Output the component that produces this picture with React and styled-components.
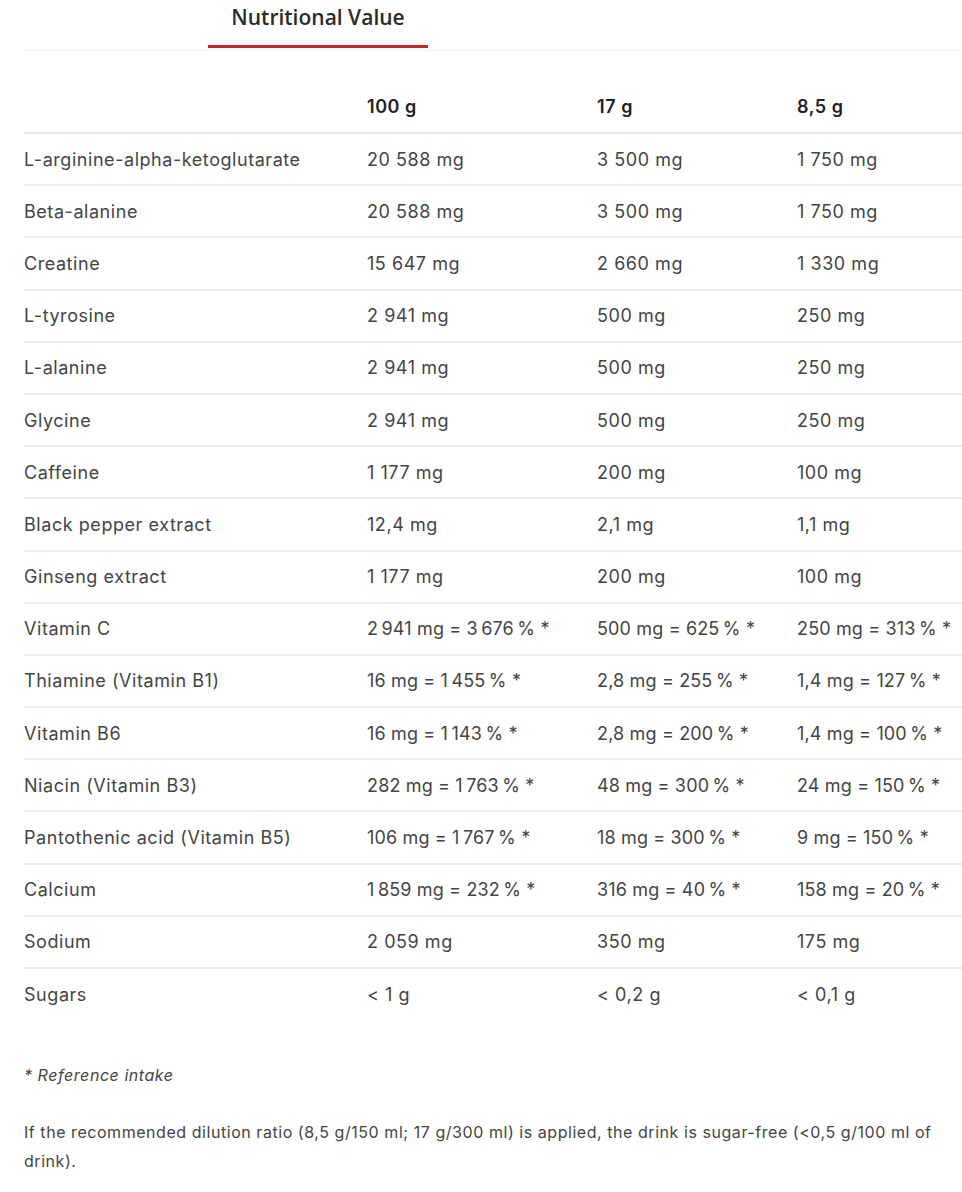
import React from "react";
import styled, { createGlobalStyle } from "styled-components";

const GlobalStyle = createGlobalStyle`
  body {
    margin: 0;
    background: #ffffff;
    font-family: Inter, "Noto Sans", "Liberation Sans", sans-serif;
    color: #444444;
  }
`;

const rows = [
  ["L-arginine-alpha-ketoglutarate", "20 588 mg", "3 500 mg", "1 750 mg"],
  ["Beta-alanine", "20 588 mg", "3 500 mg", "1 750 mg"],
  ["Creatine", "15 647 mg", "2 660 mg", "1 330 mg"],
  ["L-tyrosine", "2 941 mg", "500 mg", "250 mg"],
  ["L-alanine", "2 941 mg", "500 mg", "250 mg"],
  ["Glycine", "2 941 mg", "500 mg", "250 mg"],
  ["Caffeine", "1 177 mg", "200 mg", "100 mg"],
  ["Black pepper extract", "12,4 mg", "2,1 mg", "1,1 mg"],
  ["Ginseng extract", "1 177 mg", "200 mg", "100 mg"],
  ["Vitamin C", "2 941 mg = 3 676 % *", "500 mg = 625 % *", "250 mg = 313 % *"],
  ["Thiamine (Vitamin B1)", "16 mg = 1 455 % *", "2,8 mg = 255 % *", "1,4 mg = 127 % *"],
  ["Vitamin B6", "16 mg = 1 143 % *", "2,8 mg = 200 % *", "1,4 mg = 100 % *"],
  ["Niacin (Vitamin B3)", "282 mg = 1 763 % *", "48 mg = 300 % *", "24 mg = 150 % *"],
  ["Pantothenic acid (Vitamin B5)", "106 mg = 1 767 % *", "18 mg = 300 % *", "9 mg = 150 % *"],
  ["Calcium", "1 859 mg = 232 % *", "316 mg = 40 % *", "158 mg = 20 % *"],
  ["Sodium", "2 059 mg", "350 mg", "175 mg"],
  ["Sugars", "< 1 g", "< 0,2 g", "< 0,1 g"],
];

// percentages use narrow spaces like the original
const fmt = (s) =>
  s.includes("%") ? s.replace(/(\d) (\d)/g, "$1\u202F$2").replace(" %", "\u202F%") : s;

const Page = styled.div`
  padding-left: 24px;
`;

const Tabs = styled.div`
  display: flex;
  height: 50px;
  border-bottom: 1px solid #f3f3f3;
  padding-left: 184px;
`;

const Tab = styled.div`
  width: 220px;
  height: 48px;
  box-sizing: border-box;
  padding-top: 3px;
  text-align: center;
  font-family: "Open Sans", sans-serif;
  font-weight: 600;
  font-size: 21px;
  color: #2b2b2b;
  border-bottom: ${(p) => (p.$active ? "3px solid #c1272d" : "none")};
`;

const Table = styled.table`
  width: 938px;
  border-collapse: collapse;
  margin-top: 29px;
  table-layout: fixed;
  font-size: 18px;
  letter-spacing: 0.55px;
`;

const Col = styled.col`
  width: ${(p) => p.$w}px;
`;

const Th = styled.th`
  height: 52px;
  text-align: left;
  font-weight: 600;
  color: #222;
  padding: 0;
  border-bottom: 2px solid #e8e8e8;
`;

const Tr = styled.tr`
  & + & td {
    border-top: 2px solid #ececec;
  }
`;

const Td = styled.td`
  height: 50.2px;
  padding: 0;
  white-space: nowrap;
  letter-spacing: ${(p) => (p.$tight ? "0.15px" : "inherit")};
`;

const Note = styled.p`
  margin: 44px 0 0;
  font-style: italic;
  font-size: 16px;
  letter-spacing: 0.55px;
  line-height: 24px;
`;

const Para = styled.p`
  margin: 31px 0 0;
  font-size: 16px;
  letter-spacing: 0.55px;
  line-height: 29px;
  padding-right: 20px;
`;

export default function App() {
  return (
    <>
      <GlobalStyle />
      <Page>
        <Tabs>
          <Tab $active>Nutritional Value</Tab>
        </Tabs>
        <Table>
          <colgroup>
            <Col $w={343} />
            <Col $w={230} />
            <Col $w={200} />
            <Col $w={165} />
          </colgroup>
          <thead>
            <tr>
              <Th></Th>
              <Th>100 g</Th>
              <Th>17 g</Th>
              <Th>8,5 g</Th>
            </tr>
          </thead>
          <tbody>
            {rows.map((r) => (
              <Tr key={r[0]}>
                {r.map((c, i) => (
                  <Td key={i} $tight={c.includes("%")}>
                    {fmt(c)}
                  </Td>
                ))}
              </Tr>
            ))}
          </tbody>
        </Table>
        <Note>* Reference intake</Note>
        <Para>
          If the recommended dilution ratio (8,5 g/150 ml; 17 g/300 ml) is applied, the drink is
          sugar-free (&lt;0,5 g/100 ml of drink).
        </Para>
      </Page>
    </>
  );
}
